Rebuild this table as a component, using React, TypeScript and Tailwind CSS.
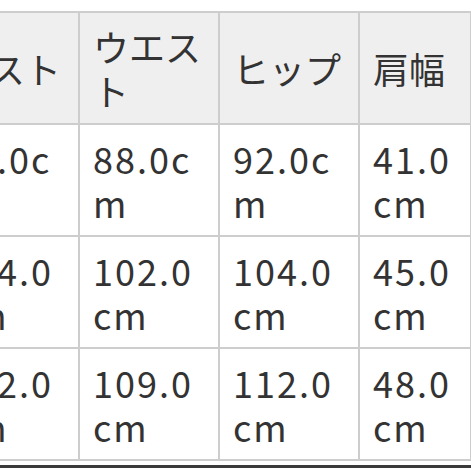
const HEAD = ['バスト', 'ウエスト', 'ヒップ', '肩幅']
const ROWS = [
  ['84.0cm', '88.0cm', '92.0cm', '41.0cm'],
  ['104.0cm', '102.0cm', '104.0cm', '45.0cm'],
  ['112.0cm', '109.0cm', '112.0cm', '48.0cm'],
]

const base =
  'h-[112px] border-2 border-[#cdcdcd] px-[13px] align-middle text-left font-normal break-all'

function width(j: number) {
  return j === 3 ? 'w-[112px] min-w-[112px] max-w-[112px]' : 'w-[140px] min-w-[140px] max-w-[140px]'
}

export default function App() {
  return (
    <div
      className="w-[471px] h-[471px] overflow-hidden bg-white pt-[11px] text-[#333333] text-[36px] leading-[44px]"
      style={{ fontFamily: '"Noto Sans CJK JP", "Noto Sans", sans-serif' }}
    >
      <table className="ml-[-62px] border-collapse table-fixed">
        <thead>
          <tr className="bg-[#efefef]">
            {HEAD.map((h, j) => (
              <th key={h} className={`${base} ${width(j)}`}>
                {h}
              </th>
            ))}
          </tr>
        </thead>
        <tbody>
          {ROWS.map((r, i) => (
            <tr key={i}>
              {r.map((v, j) => (
                <td key={j} className={`${base} ${width(j)} tracking-[2px]`}>
                  {v}
                </td>
              ))}
            </tr>
          ))}
        </tbody>
      </table>
      <div className="mt-[4px] h-[3px] bg-[#3a3a3a]" />
    </div>
  )
}
